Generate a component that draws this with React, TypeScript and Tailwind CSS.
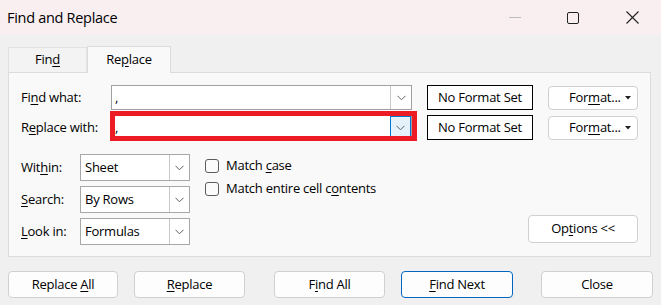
const font = { fontFamily: '"Open Sans", "Noto Sans", sans-serif' };

function Chevron() {
  return (
    <svg width="9" height="6" viewBox="0 0 9 6" className="text-[#606060]">
      <path d="M0.5 0.8 L4.5 4.8 L8.5 0.8" fill="none" stroke="currentColor" strokeWidth="1" />
    </svg>
  );
}

function U({ children }: { children: string }) {
  return <span className="underline underline-offset-[2px]">{children}</span>;
}

function ComboInput({ active }: { active?: boolean }) {
  return (
    <div className="flex w-[301px] h-[25px] bg-white border border-[#a0a0a0]">
      <div className="flex-1 pl-[3px] text-[13px] leading-[22px] text-black">,</div>
      <div
        className={
          active
            ? "w-[21px] h-full flex items-center justify-center bg-[#e5f1fb] border border-[#0078d4]"
            : "w-[21px] h-full flex items-center justify-center bg-white border-l border-[#c8c8c8]"
        }
      >
        <Chevron />
      </div>
    </div>
  );
}

function NoFormat() {
  return (
    <div className="w-[106px] h-[25px] bg-white border border-black flex items-center justify-center text-[13px] tracking-[-0.25px] text-black">
      <span>No Format Set</span>
    </div>
  );
}

function FormatButton() {
  return (
    <div className="w-[90px] h-[24px] bg-white border border-[#d0d0d0] rounded-[4px] flex items-center pl-[20px] pr-[6px] text-[13px] tracking-[-0.25px] text-black">
      <span className="flex-1">
        For<U>m</U>at...
      </span>
      <svg width="6" height="4" viewBox="0 0 6 4">
        <path d="M0 0 L6 0 L3 3.5 Z" fill="#222" />
      </svg>
    </div>
  );
}

function Select({ value }: { value: string }) {
  return (
    <div className="flex w-[110px] h-[27px] bg-white border border-[#a8a8a8]">
      <div className="flex-1 pl-[4px] text-[13px] tracking-[-0.25px] leading-[25px] text-black">{value}</div>
      <div className="w-[20px] h-full border-l border-[#c8c8c8] flex items-center justify-center">
        <Chevron />
      </div>
    </div>
  );
}

function Check({ children }: { children: React.ReactNode }) {
  return (
    <div className="flex items-center h-[14px]">
      <div className="w-[14px] h-[14px] rounded-[3px] border border-[#5c5c5c] bg-[#fbfbfb]" />
      <div className="ml-[7px] text-[13px] tracking-[-0.25px] text-black whitespace-nowrap">{children}</div>
    </div>
  );
}

function Btn({ children, primary, w }: { children: React.ReactNode; primary?: boolean; w: string }) {
  return (
    <div
      className={
        (primary ? "border-[#0067c0] " : "border-[#d0d0d0] ") +
        w +
        " h-[27px] bg-[#fdfdfd] border rounded-[4px] flex items-center justify-center text-[13px] tracking-[-0.25px] text-black"
      }
    >
      <span>{children}</span>
    </div>
  );
}

export default function App() {
  return (
    <div className="w-[661px] h-[305px] bg-[#f0f0f0] flex flex-col overflow-hidden select-none" style={font}>
      {/* title bar */}
      <div className="h-[35px] bg-[#f9eff0] flex items-center relative">
        <div className="pl-[7px] text-[14.5px] tracking-[-0.3px] text-black">Find and Replace</div>
        <div className="ml-auto flex items-center">
          <div className="w-[12px] h-px bg-[#bdbdbd] mr-[46px]" />
          <div className="w-[12px] h-[12px] border border-[#222] rounded-[2px] mr-[47px]" />
          <svg width="13" height="13" viewBox="0 0 13 13" className="mr-[22px]">
            <path d="M0.5 0.5 L12.5 12.5 M12.5 0.5 L0.5 12.5" stroke="#222" strokeWidth="1.1" />
          </svg>
        </div>
      </div>

      <div className="flex-1 flex flex-col px-[8px] pt-[10px]">
        {/* tabs */}
        <div className="flex items-end h-[27px]">
          <div className="w-[79px] h-[25px] bg-[#f3f3f3] border border-b-0 border-[#e2e2e2] flex items-center justify-center text-[13px] tracking-[-0.25px] text-black">
            <span>
              Fin<U>d</U>
            </span>
          </div>
          <div className="w-[84px] h-[27px] bg-[#f9f9f9] border border-b-0 border-[#dcdcdc] flex items-center justify-center text-[13px] tracking-[-0.25px] text-black -mb-px z-10">
            <span>
              Re<U>p</U>lace
            </span>
          </div>
        </div>

        {/* panel */}
        <div className="h-[185px] w-[643px] bg-[#f9f9f9] border border-[#dcdcdc] pl-[12px] pr-[12px] pt-[12px] flex flex-col relative text-[13px] tracking-[-0.25px]">
          <div className="flex items-center h-[25px]">
            <div className="w-[90px] text-black">
              Fi<U>n</U>d what:
            </div>
            <ComboInput />
            <div className="ml-[15px]">
              <NoFormat />
            </div>
            <div className="ml-[15px]">
              <FormatButton />
            </div>
          </div>
          <div className="flex items-center h-[25px] mt-[5px]">
            <div className="w-[90px] text-black">
              R<U>e</U>place with:
            </div>
            <ComboInput active />
            <div className="ml-[15px]">
              <NoFormat />
            </div>
            <div className="ml-[15px]">
              <FormatButton />
            </div>
          </div>
          {/* red highlight annotation */}
          <div className="absolute left-[101px] top-[38px] w-[307px] h-[30px] border-[5px] border-[#ed1c24]" />

          <div className="flex mt-[14px]">
            <div className="flex flex-col gap-[5px]">
              <div className="flex items-center">
                <div className="w-[59px] text-black">
                  Wit<U>h</U>in:
                </div>
                <Select value="Sheet" />
              </div>
              <div className="flex items-center">
                <div className="w-[59px] text-black">
                  <U>S</U>earch:
                </div>
                <Select value="By Rows" />
              </div>
              <div className="flex items-center">
                <div className="w-[59px] text-black">
                  <U>L</U>ook in:
                </div>
                <Select value="Formulas" />
              </div>
            </div>
            <div className="flex flex-col ml-[15px] pt-[5px] gap-[9px]">
              <Check>
                Match <U>c</U>ase
              </Check>
              <Check>
                Match entire cell c<U>o</U>ntents
              </Check>
            </div>
            <div className="flex-1 flex items-end justify-end pb-[2px]">
              <div className="w-[110px] h-[28px] bg-white border border-[#d0d0d0] rounded-[4px] flex items-center justify-center text-black">
                <span>
                  Op<U>t</U>ions &lt;&lt;
                </span>
              </div>
            </div>
          </div>
        </div>

        {/* bottom buttons */}
        <div className="flex mt-[14px]">
          <Btn w="w-[110px]">
            Replace <U>A</U>ll
          </Btn>
          <div className="ml-[16px]">
            <Btn w="w-[111px]">
              <U>R</U>eplace
            </Btn>
          </div>
          <div className="ml-[29px]">
            <Btn w="w-[111px]">
              F<U>i</U>nd All
            </Btn>
          </div>
          <div className="ml-[16px]">
            <Btn w="w-[112px]" primary>
              <U>F</U>ind Next
            </Btn>
          </div>
          <div className="ml-[28px]">
            <Btn w="w-[112px]">Close</Btn>
          </div>
        </div>
      </div>
    </div>
  );
}
